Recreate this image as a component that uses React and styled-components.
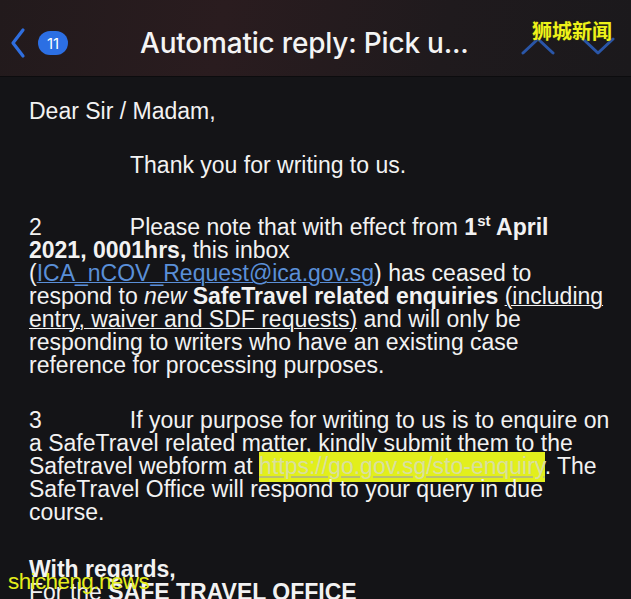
import React from 'react'
import styled, { createGlobalStyle } from 'styled-components';

const Global = createGlobalStyle`
  html, body {
    margin: 0;
    padding: 0;
    background: #141417;
  }
`;

const Screen = styled.div`
  width: 631px;
  height: 599px;
  overflow: hidden;
  position: relative;
  background: #141417;
  font-family: "Liberation Sans", Arial, sans-serif;
`;

const Header = styled.div`
  height: 77px;
  display: flex;
  align-items: center;
  padding: 10px 16px 0 10px;
  box-sizing: border-box;
  background: linear-gradient(100deg, #221a1c 0%, #2a1c1f 35%, #1f1a1d 70%, #1b191c 100%);
  border-bottom: 1px solid #0c0c0e;
  position: relative;
`;

const BackBtn = styled.div`
  display: flex;
  align-items: center;
  gap: 12px;
  width: 120px;
`;

const Badge = styled.div`
  width: 30px;
  height: 24px;
  border-radius: 12px;
  background: #2c6fe3;
  color: #fff;
  font-family: Inter, "Noto Sans", sans-serif;
  font-size: 15px;
  display: flex;
  align-items: center;
  justify-content: center;
`;

const Title = styled.div`
  flex: 1;
  color: #f4f4f4;
  font-family: Inter, "Noto Sans", sans-serif;
  font-weight: 500;
  font-size: 28px;
  letter-spacing: -0.2px;
  padding-left: 10px;
  white-space: nowrap;
`;

const Arrows = styled.div`
  display: flex;
  gap: 26px;
  align-items: center;
  margin-top: 6px;
`;

const Mark = styled.div`
  position: absolute;
  right: 19px;
  top: 16px;
  color: #eef21a;
  font-family: "Noto Sans CJK SC", sans-serif;
  font-weight: 700;
  font-size: 20px;
  text-shadow: 0 0 2px #3a3a10;
`;

const Body = styled.div`
  padding: 23px 0 0 29px;
  color: #f2f2f2;
  font-size: 23px;
  line-height: 23px;
  letter-spacing: 0;
  white-space: nowrap;
`;

const Para = styled.p`
  margin: 0 0 ${({ gap }) => gap || 31}px 0;
`;

const Indent = styled.span`
  display: inline-block;
  width: ${({ w }) => w || 101}px;
`;

const Sup = styled.sup`
  font-size: 15px;
  line-height: 0;
`;

const Link = styled.span`
  color: #5a8fd8;
  text-decoration: underline;
  text-decoration-thickness: 1px;
`;

const Highlight = styled.span`
  background: #e2ef1c;
  color: #d8dfa0;
  text-decoration: underline;
  text-decoration-color: #b9c070;
  padding: 1px 0 3px;
`;

const Under = styled.span`
  text-decoration: underline;
  text-decoration-thickness: 1px;
`;

const FootMark = styled.div`
  position: absolute;
  left: 8px;
  bottom: 4px;
  color: #e4ee1c;
  font-family: "Liberation Sans", Arial, sans-serif;
  font-size: 22.5px;
  letter-spacing: -0.6px;
`;

const Chevron = ({ d, color, w = 34, h = 20, sw = 3 }) => (
  <svg width={w} height={h} viewBox={`0 0 ${w} ${h}`} fill="none">
    <path d={d} stroke={color} strokeWidth={sw} strokeLinecap="round" strokeLinejoin="round" />
  </svg>
);

export default function App() {
  return (
    <Screen>
      <Global />
      <Header>
        <BackBtn>
          <Chevron d="M13 3 L3 16 L13 29" color="#2f6ede" w={16} h={32} sw={3.2} />
          <Badge>11</Badge>
        </BackBtn>
        <Title>Automatic reply: Pick u...</Title>
        <Arrows>
          <Chevron d="M2 17 L17 3 L32 17" color="#2a56a8" />
          <Chevron d="M2 3 L17 17 L32 3" color="#2a56a8" />
        </Arrows>
        <Mark>狮城新闻</Mark>
      </Header>
      <Body>
        <Para>Dear Sir / Madam,</Para>
        <Para gap={39}><Indent />Thank you for writing to us.</Para>
        <Para gap={32}>
          2<Indent w={88} />Please note that with effect from <b>1<Sup>st</Sup> April</b><br />
          <b>2021, 0001hrs,</b> this inbox<br />
          (<Link>ICA_nCOV_Request@ica.gov.sg</Link>) has ceased to<br />
          respond to <i>new</i> <b>SafeTravel related enquiries</b> <Under>(including</Under><br />
          <Under>entry, waiver and SDF requests)</Under> and will only be<br />
          responding to writers who have an existing case<br />
          reference for processing purposes.
        </Para>
        <Para gap={34}>
          3<Indent w={88} />If your purpose for writing to us is to enquire on<br />
          a SafeTravel related matter, kindly submit them to the<br />
          Safetravel webform at <Highlight>https://go.gov.sg/sto-enquiry</Highlight>. The<br />
          SafeTravel Office will respond to your query in due<br />
          course.
        </Para>
        <Para gap={0}>
          <b>With regards,</b><br />
          For the <b>SAFE TRAVEL OFFICE</b>
        </Para>
      </Body>
      <FootMark>shicheng.news</FootMark>
    </Screen>
  )
}
